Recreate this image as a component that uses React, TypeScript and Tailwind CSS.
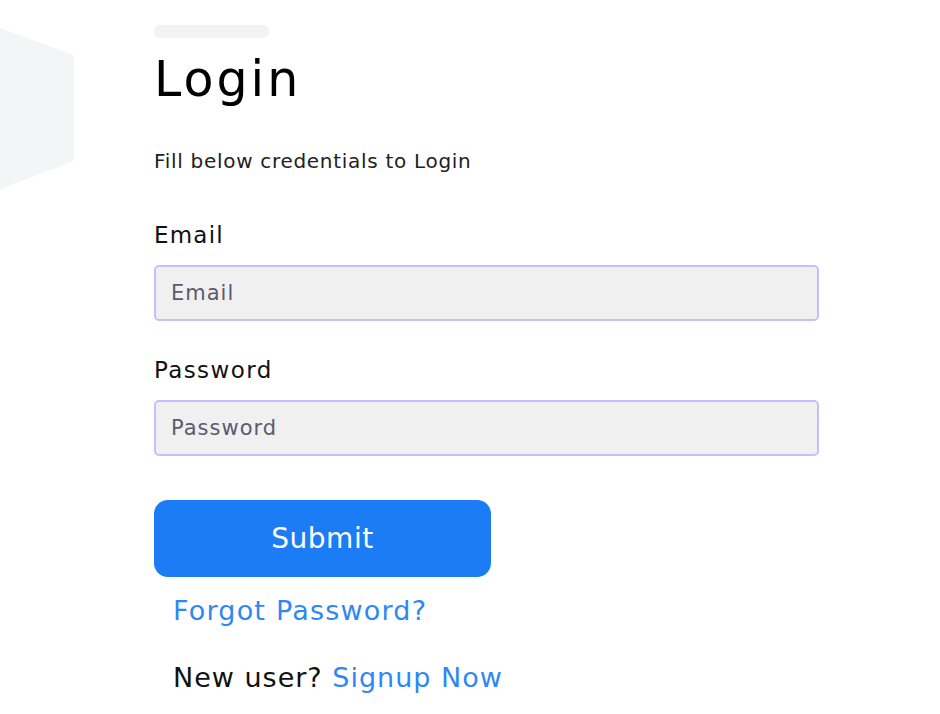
import React from "react";

export default function App() {
  return (
    <div
      className="relative w-[940px] h-[714px] overflow-hidden bg-white"
      style={{ fontFamily: '"DejaVu Sans", "Liberation Sans", sans-serif' }}
    >
      <svg
        className="absolute left-0 top-0"
        width="80"
        height="200"
        viewBox="0 0 80 200"
      >
        <polygon points="0,28 74,55 74,161 0,189" fill="#f3f6f6" />
      </svg>

      <div className="relative ml-[154px] pt-[25px] flex flex-col">
        <div className="w-[115px] h-[13px] rounded-md bg-[#f0f4f4]" />
        <h1 className="mt-[14px] text-[49px] leading-[56px] font-normal text-black tracking-[3px]">
          Login
        </h1>
        <p className="mt-[41px] text-[20px] leading-[24px] text-[#222] tracking-[0.7px]">
          Fill below credentials to Login
        </p>

        <label className="mt-[48px] text-[23px] leading-[28px] font-medium text-[#111] tracking-[1.2px]">
          Email
        </label>
        <input
          placeholder="Email"
          className="mt-[16px] w-[665px] h-[56px] rounded-[5px] border-2 border-[#c9bdfb] bg-[#f0f0f0] px-[15px] text-[21px] tracking-[1px] text-[#333] placeholder:text-[#5c5a70] outline-none"
        />

        <label className="mt-[35px] text-[23px] leading-[28px] font-medium text-[#111] tracking-[1.4px]">
          Password
        </label>
        <input
          type="password"
          placeholder="Password"
          className="mt-[16px] w-[665px] h-[56px] rounded-[5px] border-2 border-[#c9bdfb] bg-[#f0f0f0] px-[15px] text-[21px] tracking-[1px] text-[#333] placeholder:text-[#5c5a70] outline-none"
        />

        <button className="mt-[44px] w-[337px] h-[77px] rounded-[14px] bg-[#1b7cf5] text-white text-[28px] font-normal tracking-[0.5px]">
          Submit
        </button>

        <a className="mt-[17px] ml-[19px] text-[27px] leading-[34px] text-[#2d88f5] tracking-[1.2px]">
          Forgot Password?
        </a>

        <p className="mt-[33px] ml-[19px] text-[27px] leading-[34px] text-[#111] tracking-[1px]">
          New user? <span className="text-[#2d88f5]">Signup Now</span>
        </p>
      </div>
    </div>
  );
}
